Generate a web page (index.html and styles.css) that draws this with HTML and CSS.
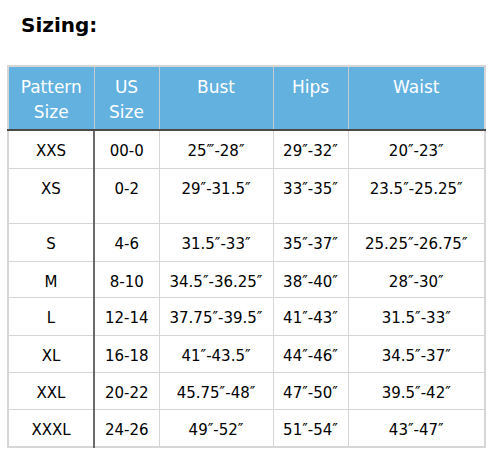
FILE: index.html
```html
<!DOCTYPE html>
<html>
<head>
<meta charset="utf-8">
<link rel="stylesheet" href="styles.css">
</head>
<body>
<h1 class="title">Sizing:</h1>
<table class="sizes">
  <colgroup>
    <col class="c1"><col class="c2"><col class="c3"><col class="c4"><col class="c5">
  </colgroup>
  <thead>
    <tr><th>Pattern<br>Size</th><th>US<br>Size</th><th>Bust</th><th>Hips</th><th>Waist</th></tr>
  </thead>
  <tbody>
    <tr class="tall"><td>XXS</td><td>00-0</td><td>25‴-28″</td><td>29″-32″</td><td>20″-23″</td></tr>
    <tr class="tall"><td>XS<br>&nbsp;</td><td>0-2</td><td>29″-31.5″</td><td>33″-35″</td><td>23.5″-25.25″</td></tr>
    <tr class="tall"><td>S</td><td>4-6</td><td>31.5″-33″</td><td>35″-37″</td><td>25.25″-26.75″</td></tr>
    <tr class="short"><td>M</td><td>8-10</td><td>34.5″-36.25″</td><td>38″-40″</td><td>28″-30″</td></tr>
    <tr class="tall"><td>L</td><td>12-14</td><td>37.75″-39.5″</td><td>41″-43″</td><td>31.5″-33″</td></tr>
    <tr><td>XL</td><td>16-18</td><td>41″-43.5″</td><td>44″-46″</td><td>34.5″-37″</td></tr>
    <tr><td>XXL</td><td>20-22</td><td>45.75″-48″</td><td>47″-50″</td><td>39.5″-42″</td></tr>
    <tr><td>XXXL</td><td>24-26</td><td>49″-52″</td><td>51″-54″</td><td>43″-47″</td></tr>
  </tbody>
</table>
</body>
</html>
```
FILE: styles.css
```css
html, body {
  margin: 0;
  padding: 0;
  background: #ffffff;
}
body {
  padding: 11px 0 0 7px;
  font-family: "DejaVu Sans", "Open Sans", sans-serif;
  color: #000;
}
.title {
  margin: 0 0 26px 14px;
  font-size: 20px;
  line-height: 28px;
  font-weight: 700;
}
.sizes {
  border-collapse: collapse;
  width: 477px;
  table-layout: fixed;
  border: 2px solid #d6d6d6;
}
.c1 { width: 86px; }
.c2 { width: 65px; }
.c3 { width: 114px; }
.c4 { width: 75px; }
.c5 { width: 137px; }
.sizes th {
  background: #62b1df;
  color: #ffffff;
  font-weight: 400;
  font-size: 17px;
  line-height: 25px;
  padding: 8px 0 4px;
  vertical-align: top;
  border: 1px solid #c4ccd2;
  border-bottom: 2px solid #4a4a4a;
  border-top: none;
}
.sizes td {
  font-size: 15px;
  line-height: 17px;
  text-align: center;
  vertical-align: top;
  padding: 12px 0 7px;
  border: 1px solid #d6d6d6;
}
.sizes tr.tall td { padding-bottom: 8px; }
.sizes tr.short td { padding-bottom: 6px; }
.sizes td:first-child {
  border-right: 2px solid #6a6a6a;
}
```
